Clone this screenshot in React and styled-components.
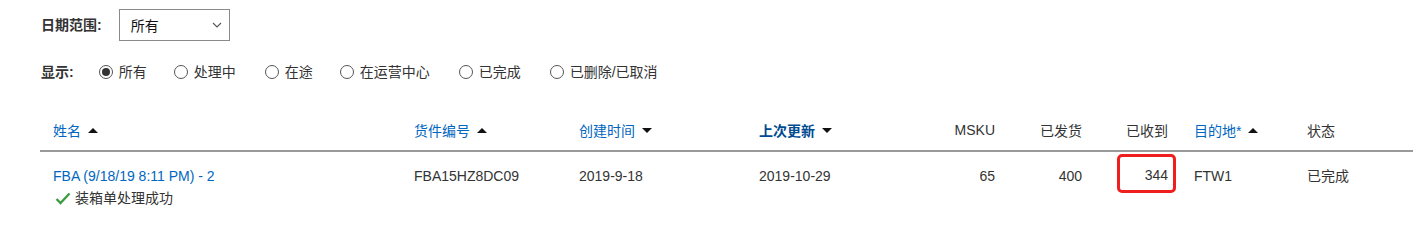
import React from "react";
import styled, { createGlobalStyle } from "styled-components";

const Global = createGlobalStyle`
  html, body { margin: 0; padding: 0; background: #fff; }
  body {
    font-family: "Liberation Sans", Arial, "Noto Sans CJK SC", sans-serif;
    font-size: 14px;
    color: #333;
  }
`;

const Page = styled.div`
  width: 1413px;
  height: 237px;
  overflow: hidden;
  box-sizing: border-box;
  padding: 9px 0 0 41px;
`;

const FilterRow = styled.div`
  display: flex;
  align-items: center;
  height: 32px;
`;

const Label = styled.span`
  font-weight: 700;
  color: #333;
  line-height: 20px;
  margin-right: ${(p) => p.$gap || 12}px;
  white-space: nowrap;
`;

const Select = styled.div`
  box-sizing: border-box;
  width: 111px;
  height: 32px;
  border: 1px solid #8a8a8a;
  display: flex;
  align-items: center;
  justify-content: space-between;
  padding: 0 7px 0 11px;
  color: #111;
`;

const RadioRow = styled.div`
  display: flex;
  align-items: center;
  height: 22px;
  margin-top: 20px;
`;

const RadioItem = styled.label`
  display: flex;
  align-items: center;
  margin-right: ${(p) => p.$gap}px;
  color: #333;
  line-height: 20px;
  white-space: nowrap;
`;

const Circle = styled.span`
  box-sizing: border-box;
  width: 14px;
  height: 14px;
  border-radius: 50%;
  border: 1px solid #555;
  display: inline-flex;
  align-items: center;
  justify-content: center;
  margin-right: 6px;
  &::after {
    content: "";
    width: 8px;
    height: 8px;
    border-radius: 50%;
    background: ${(p) => (p.$on ? "#333" : "transparent")};
  }
`;

const Table = styled.div`
  margin: 29px 0 0 -1px;
  display: grid;
  grid-template-columns: 361px 165px 180px 194px 68px 87px 86px 113px 119px;
`;

const HeadCell = styled.div`
  height: 40px;
  display: flex;
  align-items: center;
  justify-content: ${(p) => (p.$right ? "flex-end" : "flex-start")};
  padding: 0 13px;
  border-bottom: 2px solid #9a9a9a;
  color: ${(p) => (p.$active ? "#004b91" : p.$link ? "#0066c0" : "#333")};
  font-weight: ${(p) => (p.$active ? 700 : 400)};
  white-space: nowrap;
  padding-bottom: 2px;
  box-sizing: border-box;
`;

const Arrow = styled.span`
  width: 0;
  height: 0;
  margin-left: 7px;
  border-left: 5px solid transparent;
  border-right: 5px solid transparent;
  ${(p) =>
    p.$up
      ? "border-bottom: 5px solid #111;"
      : "border-top: 5px solid #111;"}
`;

const Cell = styled.div`
  padding: 13px 13px 0;
  line-height: 22px;
  text-align: ${(p) => (p.$right ? "right" : "left")};
  color: #333;
  white-space: nowrap;
`;

const LinkText = styled.a`
  color: #0066c0;
  text-decoration: none;
`;

const Status = styled.div`
  display: flex;
  align-items: center;
  color: #333;
`;

const HighlightCell = styled.div`
  display: flex;
  justify-content: flex-end;
  padding: 2px 5px 0 0;
`;

const Highlight = styled.div`
  box-sizing: border-box;
  width: 59px;
  height: 39px;
  border: 3px solid #f01f1f;
  border-radius: 5px;
  display: flex;
  align-items: center;
  justify-content: flex-end;
  padding: 3px 5px 0 0;
  color: #333;
`;

const Chevron = () => (
  <svg width="10" height="6" viewBox="0 0 10 6">
    <path d="M1 1l4 4 4-4" fill="none" stroke="#555" strokeWidth="1.1" />
  </svg>
);

const Check = () => (
  <svg width="16" height="13" viewBox="0 0 16 13" style={{ margin: "0 4px 0 2px" }}>
    <path d="M1.5 7l4 4L14.5 1.5" fill="none" stroke="#3a9d3f" strokeWidth="2.3" />
  </svg>
);

const radios = [
  ["所有", 27],
  ["处理中", 29],
  ["在途", 27],
  ["在运营中心", 29],
  ["已完成", 29],
  ["已删除/已取消", 0],
];

export default function App() {
  return (
    <Page>
      <Global />
      <FilterRow>
        <Label $gap={17}>日期范围:</Label>
        <Select>
          <span>所有</span>
          <Chevron />
        </Select>
      </FilterRow>
      <RadioRow>
        <Label $gap={25}>显示:</Label>
        {radios.map(([r, g], i) => (
          <RadioItem key={r} $gap={g}>
            <Circle $on={i === 0} />
            {r}
          </RadioItem>
        ))}
      </RadioRow>
      <Table>
        <HeadCell $link>姓名<Arrow $up /></HeadCell>
        <HeadCell $link>货件编号<Arrow $up /></HeadCell>
        <HeadCell $link>创建时间<Arrow /></HeadCell>
        <HeadCell $active>上次更新<Arrow /></HeadCell>
        <HeadCell $right>MSKU</HeadCell>
        <HeadCell $right>已发货</HeadCell>
        <HeadCell $right>已收到</HeadCell>
        <HeadCell $link>目的地*<Arrow $up /></HeadCell>
        <HeadCell>状态</HeadCell>

        <Cell>
          <LinkText>FBA (9/18/19 8:11 PM) - 2</LinkText>
          <Status><Check />装箱单处理成功</Status>
        </Cell>
        <Cell>FBA15HZ8DC09</Cell>
        <Cell>2019-9-18</Cell>
        <Cell>2019-10-29</Cell>
        <Cell $right>65</Cell>
        <Cell $right>400</Cell>
        <HighlightCell>
          <Highlight>344</Highlight>
        </HighlightCell>
        <Cell>FTW1</Cell>
        <Cell>已完成</Cell>
      </Table>
    </Page>
  );
}
